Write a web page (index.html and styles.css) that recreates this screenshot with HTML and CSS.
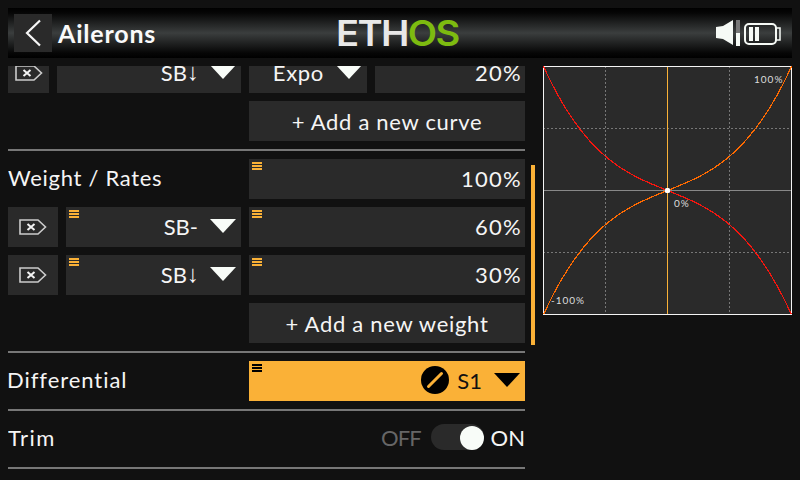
FILE: index.html
```html
<!DOCTYPE html>
<html lang="en">
<head>
  <meta charset="UTF-8" />
  <meta name="viewport" content="width=device-width, initial-scale=1.0" />
  <title>Ailerons</title>
  <link rel="stylesheet" href="styles.css">
</head>
<body>
  <header class="topbar">
    <div class="topbar-left">
      <button class="back">
        <svg width="18" height="28" viewBox="0 0 18 28"><path d="M16 1.5 L3 14 L16 26.5" fill="none" stroke="#f6f6f6" stroke-width="2.2"/></svg>
      </button>
      <h1>Ailerons</h1>
    </div>
    <div class="logo"><span>ETH</span><span class="logo-os">OS</span></div>
    <div class="status">
      <svg width="65" height="26" viewBox="0 0 65 26">
        <path d="M0 7 L7 6 L17 0 L17 25 L7 19 L0 18 Z" fill="#f6faf6"/>
        <rect x="20" y="0" width="4" height="13" fill="#777"/>
        <rect x="20" y="13" width="4" height="13" fill="#f6faf6"/>
        <rect x="29" y="4" width="31" height="20" rx="4" fill="none" stroke="#f6faf6" stroke-width="2"/>
        <path d="M60 8 H64 V20 H60" fill="none" stroke="#f6faf6" stroke-width="1.5"/>
        <rect x="33" y="7" width="4" height="14" fill="#f6faf6"/>
        <rect x="39" y="7" width="4" height="14" fill="#f6faf6"/>
      </svg>
    </div>
  </header>

  <main class="content">
    <section class="list">
      <div class="row row-clipped">
        <div class="field del del-narrow">
          <svg width="28" height="16" viewBox="0 0 28 16"><path d="M1 1 H19 L26.500 8 L19 15 H1 Z" fill="none" stroke="#ccc" stroke-width="1.6"/><path d="M8.500 5 L15.500 11 M15.500 5 L8.500 11" stroke="#f4f4f4" stroke-width="2"/></svg>
        </div>
        <div class="field select source-wide"><span class="src">SB</span><span class="arrow">↓</span><i class="caret"></i></div>
        <div class="field select func">Expo<i class="caret"></i></div>
        <div class="field value val-narrow">20%</div>
      </div>
      <div class="row">
        <div class="spacer"></div>
        <div class="field action">+ Add a new curve</div>
      </div>
      <hr>
      <div class="row">
        <div class="label spacer">Weight / Rates</div>
        <div class="field value val-wide"><i class="drag"></i>100%</div>
      </div>
      <div class="row">
        <div class="field del">
          <svg width="28" height="16" viewBox="0 0 28 16"><path d="M1 1 H19 L26.500 8 L19 15 H1 Z" fill="none" stroke="#ccc" stroke-width="1.6"/><path d="M8.500 5 L15.500 11 M15.500 5 L8.500 11" stroke="#f4f4f4" stroke-width="2"/></svg>
        </div>
        <div class="field select source"><i class="drag"></i><span class="src">SB-</span><i class="caret"></i></div>
        <div class="field value val-wide"><i class="drag"></i>60%</div>
      </div>
      <div class="row">
        <div class="field del">
          <svg width="28" height="16" viewBox="0 0 28 16"><path d="M1 1 H19 L26.500 8 L19 15 H1 Z" fill="none" stroke="#ccc" stroke-width="1.6"/><path d="M8.500 5 L15.500 11 M15.500 5 L8.500 11" stroke="#f4f4f4" stroke-width="2"/></svg>
        </div>
        <div class="field select source"><i class="drag"></i><span class="src">SB</span><span class="arrow">↓</span><i class="caret"></i></div>
        <div class="field value val-wide"><i class="drag"></i>30%</div>
      </div>
      <div class="row">
        <div class="spacer"></div>
        <div class="field action">+ Add a new weight</div>
      </div>
      <hr>
      <div class="row">
        <div class="label spacer label-diff">Differential</div>
        <div class="field select val-wide active">
          <i class="drag"></i>
          <svg class="knob" width="28" height="28" viewBox="0 0 28 28"><circle cx="14" cy="14" r="14" fill="#000"/><path d="M7.500 20.500 L20.500 7.500" stroke="#fab137" stroke-width="3" stroke-linecap="round"/></svg>
          S1<i class="caret"></i>
        </div>
      </div>
      <hr>
      <div class="row">
        <div class="label spacer label-trim">Trim</div>
        <div class="toggle">
          <span class="off">OFF</span>
          <span class="track"><i class="thumb"></i></span>
          <span>ON</span>
        </div>
      </div>
      <hr>
    </section>

    <div class="scrollbar"></div>

    <svg class="chart" width="249" height="249" viewBox="0 0 249 249">
      <rect x="0" y="0" width="249" height="249" fill="#2a2a2a"/>
      <path class="grid" d="M62.500 0 V249 M186.500 0 V249 M0 62.500 H249 M0 186.500 H249"/>
      <path d="M0 124.500 H249" stroke="#888" fill="none"/>
      <path d="M124.500 0 V249" stroke="#fab137" fill="none"/>
      <rect x="0.500" y="0.500" width="248" height="248" fill="none" stroke="#f4f4f4"/>
      <path class="curve" d="M0.500 248.500 C83.200 66.600 165.800 182.400 248.500 0.500" stroke="#ff6a00"/>
      <path class="curve" d="M0.500 0.500 C83.200 182.400 165.800 66.600 248.500 248.500" stroke="#f5160f"/>
      <rect x="122" y="122" width="5" height="5" rx="1.500" fill="#fff"/>
      <text x="211" y="17">100%</text>
      <text x="131" y="141">0%</text>
      <text x="8" y="238">-100%</text>
    </svg>
  </main>
</body>
</html>
```

FILE: styles.css
```css
* {
  box-sizing: border-box;
}
html, body {
  height: 100%;
}
body {
  margin: 0;
  padding: 8px 8px 0;
  height: 480px;
  overflow: hidden;
  background: #111;
  color: #f5f5f5;
  font-family: Lato, sans-serif;
  font-size: 22px;
  letter-spacing: 0.7px;
}

/* top bar */
.topbar {
  height: 50px;
  display: grid;
  grid-template-columns: 1fr auto 1fr;
  align-items: center;
  padding: 0 11px 0 6px;
  background: linear-gradient(#000 0, #060606 10%, #3b3e3e 50%, #060606 90%, #000 100%);
}
.topbar-left {
  display: flex;
  align-items: center;
  gap: 6px;
}
.back {
  width: 38px;
  height: 38px;
  padding: 0;
  border: 0;
  background: #2a2a2a;
  display: flex;
  align-items: center;
  justify-content: center;
}
h1 {
  margin: 0;
  font-size: 25px;
  font-weight: 700;
  letter-spacing: 0.8px;
  color: #fafafa;
}
.logo {
  font-family: Inter, sans-serif;
  font-size: 35px;
  font-weight: 600;
  line-height: 50px;
  letter-spacing: -1.5px;
  color: #e8e8e8;
  transform: scaleX(1.09);
}
.logo-os {
  color: #7dbb10;
}
.status {
  display: flex;
  justify-content: flex-end;
}

/* main area */
.content {
  display: flex;
  margin-top: 8px;
  height: 414px;
  overflow: hidden;
}
.list {
  width: 517px;
  flex: none;
  display: flex;
  flex-direction: column;
  gap: 8px;
}
.row {
  display: flex;
  gap: 8px;
  height: 40px;
  flex: none;
  align-items: center;
}
.row-clipped {
  height: 27px;
  overflow: hidden;
  align-items: flex-end;
}
.spacer {
  width: 233px;
  flex: none;
}
.label {
  padding-bottom: 4px;
}
.label-diff {
  margin-left: -1px;
  margin-right: 1px;
  letter-spacing: 0.95px;
}
.label-trim {
  letter-spacing: 1.5px;
}
hr {
  margin: 0;
  border: 0;
  height: 2px;
  flex: none;
  background: #777;
}

.field {
  position: relative;
  height: 40px;
  flex: none;
  background: #2a2a2a;
  display: flex;
  align-items: center;
  justify-content: flex-end;
}
.del {
  width: 50px;
  justify-content: center;
}
.del-narrow {
  width: 41px;
}
.source {
  width: 175px;
}
.source-wide {
  width: 184px;
}
.func {
  width: 118px;
}
.val-wide {
  width: 276px;
}
.val-narrow {
  width: 150px;
}
.value {
  padding: 0 3px 2px 0;
  letter-spacing: 1.3px;
}
.select {
  padding: 0 5px 2px 0;
}
.action {
  width: 276px;
  justify-content: center;
}
.caret {
  width: 0;
  height: 0;
  margin-left: 12px;
  border-style: solid;
  border-width: 14px 13px 0;
  border-color: #f8fcf8 transparent transparent;
}
.src {
  letter-spacing: 0;
}
.arrow {
  font-family: "Liberation Sans", sans-serif;
  font-size: 24px;
  line-height: 1;
  letter-spacing: 0;
  margin-right: -1px;
}
.drag {
  position: absolute;
  left: 3px;
  top: 3px;
  width: 10px;
  height: 8px;
  background: repeating-linear-gradient(#fab137 0, #fab137 2px, transparent 2px, transparent 3px);
}

.active {
  background: #fab137;
  color: #111;
  letter-spacing: 0;
}
.active .drag {
  background: repeating-linear-gradient(#000 0, #000 2px, transparent 2px, transparent 3px);
}
.active .caret {
  border-color: #000 transparent transparent;
}
.knob {
  margin-right: 8px;
}

.toggle {
  width: 276px;
  padding: 0 0 4px 0;
  display: flex;
  align-items: center;
  justify-content: flex-end;
  gap: 7px;
  letter-spacing: 0;
}
.off {
  color: #666;
  margin-right: 3px;
  letter-spacing: -1px;
}
.track {
  width: 53px;
  height: 26px;
  border-radius: 13px;
  background: #2a2a2a;
  display: flex;
  align-items: flex-end;
  justify-content: flex-end;
}
.thumb {
  width: 24px;
  height: 24px;
  border-radius: 50%;
  background: #f8fcf8;
}

.scrollbar {
  width: 4px;
  height: 180px;
  flex: none;
  margin: 99px 8px 0 6px;
  background: #fab137;
}

.chart {
  flex: none;
}
.grid {
  fill: none;
  stroke: #777;
  stroke-dasharray: 2 2;
}
.curve {
  fill: none;
  stroke-width: 1.2;
  shape-rendering: crispEdges;
}
.chart text {
  font-size: 10px;
  letter-spacing: 1px;
  fill: #ddd;
}
```
